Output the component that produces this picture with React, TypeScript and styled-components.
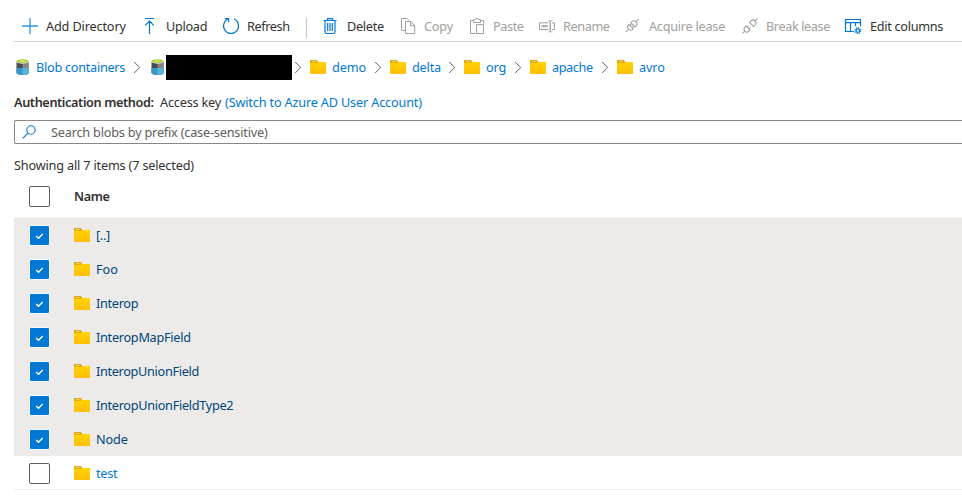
import React from "react";
import styled, { createGlobalStyle } from "styled-components";

const GlobalStyle = createGlobalStyle`
  * { box-sizing: border-box; }
  body { margin: 0; background: #fff; overflow: hidden; }
`;

const Page = styled.main`
  width: 100%;
  height: 499px;
  padding-left: 14px;
  overflow: hidden;
  font: 12.7px/18px "Noto Sans", sans-serif;
  color: #323130;
  white-space: nowrap;
`;

const Toolbar = styled.nav`
  display: flex;
  height: 42px;
  padding: 11px 0 0 8px;
  border-bottom: 1px solid #d2d0ce;
`;

const Command = styled.button<{ $width: number; $disabled?: boolean; $gap?: number }>`
  display: flex;
  flex: none;
  align-items: center;
  gap: ${({ $gap }) => $gap ?? 8}px;
  width: ${({ $width }) => $width}px;
  height: 30px;
  padding: 0;
  border: 0;
  background: none;
  font: inherit;
  text-align: left;
  color: ${({ $disabled }) => ($disabled ? "#a19f9d" : "#323130")};
`;

const Separator = styled.div`
  flex: none;
  width: 1px;
  height: 20px;
  margin: 7px 15px 0 0;
  background: #c8c6c4;
`;

const Label = styled.span<{ $spacing?: number }>`
  display: block;
  letter-spacing: ${({ $spacing }) => $spacing ?? 0}px;
`;

const Icon = styled.svg`
  display: block;
  flex: none;
  overflow: visible;
`;

const Breadcrumbs = styled.nav`
  display: flex;
  align-items: center;
  height: 25px;
  margin-top: 13px;
  color: #0078d4;
`;

const Crumb = styled.a<{ $width: number }>`
  display: flex;
  flex: none;
  align-items: center;
  gap: 6px;
  width: ${({ $width }) => $width}px;
  padding-bottom: 1px;
`;

const ContainerCrumb = styled(Crumb)`
  gap: 7px;
  padding-left: 2px;
`;

const Chevron = styled(Icon)`
  width: 8px;
  margin-right: 8px;
`;

const Redacted = styled.div`
  flex: none;
  width: 126px;
  height: 25px;
  margin-right: 2px;
  background: #000;
`;

const AuthRow = styled.div`
  display: flex;
  height: 18px;
  margin-top: 13px;
`;

const AuthLabel = styled.strong`
  width: 146px;
  font-weight: 600;
  letter-spacing: -0.38px;
`;

const AuthValue = styled.span`
  width: 65px;
  letter-spacing: -0.2px;
`;

const Link = styled.a`
  color: #0078d4;
  letter-spacing: -0.17px;
`;

const SearchBox = styled.div`
  display: flex;
  align-items: center;
  gap: 14px;
  height: 24px;
  margin-top: 9px;
  padding-left: 7px;
  border: 1px solid #8a8886;
  border-right: 0;
  border-radius: 2px 0 0 2px;
  color: #605e5c;
`;

const Summary = styled.div`
  height: 18px;
  margin-top: 12px;
  letter-spacing: -0.18px;
`;

const HeaderRow = styled.div`
  display: flex;
  align-items: center;
  height: 43px;
  padding-left: 15px;
  font-weight: 600;
  letter-spacing: -0.4px;
`;

const Row = styled.div<{ $selected: boolean }>`
  display: flex;
  align-items: center;
  height: 34px;
  padding: 2px 0 0 15px;
  background: ${({ $selected }) => ($selected ? "#edebe9" : "#fff")};
  color: ${({ $selected }) => ($selected ? "#004578" : "#0078d4")};
  border-bottom: 1px solid #edebe9;
`;

const CheckCell = styled.div<{ $drop?: boolean }>`
  width: 45px;
  padding-top: ${({ $drop }) => ($drop ? 1 : 0)}px;
`;

const Checkbox = styled.div<{ $checked?: boolean }>`
  display: grid;
  place-items: center;
  width: 21px;
  height: 21px;
  border: 1px solid ${({ $checked }) => ($checked ? "#f6fbff" : "#605e5c")};
  border-radius: 2px;
  background: ${({ $checked }) => ($checked ? "#0078d4" : "#fff")};
`;

const NameCell = styled.a`
  display: flex;
  align-items: center;
  gap: 6px;
  padding-bottom: 1px;
`;

const Table = styled.section`
  border-top: 1px solid #f3f2f1;
`;

function Folder() {
  return (
    <Icon width="16" height="14" viewBox="0 0 16 14">
      <defs>
        <linearGradient id="folderFill" x1="0" y1="0" x2="0" y2="1">
          <stop offset="0" stopColor="#ffd400" />
          <stop offset="1" stopColor="#ffbe0a" />
        </linearGradient>
      </defs>
      <path d="M0 .6Q0 0 .6 0H7l1.2 2H16v12H0Z" fill="#e3a90c" />
      <path d="M2 1h3.6v.8H2Z" fill="#fbe08a" />
      <path d="M0 3h7L8.4 2H16v12H0Z" fill="url(#folderFill)" />
    </Icon>
  );
}

function Container() {
  return (
    <Icon width="13" height="16" viewBox="0 0 13 16">
      <path d="M.5 2.6v11C.5 16.8 12.5 16.8 12.5 13.6V2.6Z" fill="#4b4b4d" />
      <path d="M6.5 4v12c3.4 0 6-.8 6-2.3V2.6Z" fill="#858585" />
      <path d="M.5 9h12v4.7c0 3-12 3-12 0Z" fill="#3999c6" />
      <path d="M6.5 9h6v4.7c0 1.5-2.6 2.3-6 2.3Z" fill="#59b4d9" />
      <ellipse cx="6.5" cy="2.7" rx="6" ry="2" fill="#e6e6e6" />
      <ellipse cx="6.5" cy="2" rx="5.3" ry="1.8" fill="#9ccc10" />
      <ellipse cx="6.5" cy="2" rx="3.6" ry=".8" fill="#d9ee85" />
    </Icon>
  );
}

const drawings: Record<string, React.ReactNode> = {
  add: <path d="M8 0v16M0 8h16" strokeWidth="1.3" opacity=".8" />,
  upload: <path d="M3 .5h9M7.5 16V3.2M3.2 7.4l4.3-4.3 4.3 4.3" strokeWidth="1.2" />,
  refresh: <path d="M5.1 1.1A7.5 7.5 0 1 0 11 1.1M2 .6h3.7v3.7" strokeWidth="1.1" />,
  delete: <path d="M1.5 2.5h13M5.5 2.5V.6h5v1.9M3 2.5v11.3q0 1.7 1.7 1.7h6.6q1.7 0 1.7-1.7V2.5M5.7 5v8M8 5v8M10.3 5v8" strokeWidth="1.2" />,
  copy: <path d="M9 2.5 7.2.5H1.5v12h4M5.5 3.5h5.2l4 4v8H5.5ZM10.5 3.7v4h4" />,
  paste: <path d="M4.5 2.5H1.5v13h5M4.5 2.5V1.8h2C6.7-.1 9.3-.1 9.5 1.8h2v2.7h-7ZM11.5 2.5h3v3M7.5 6.5h7v9h-7Z" />,
  rename: <path d="M9.5 4.8H.5v6.7h9M2.5 7.7h6v1h-6M13 4.8h2.5v6.7H13M9.2 2.5c2.1 0 2.1 1 2.1 1.8v7.9c0 .8 0 1.8-2.1 1.8M13.5 2.5c-2.2 0-2.2 1-2.2 1.8v7.9c0 .8 0 1.8 2.2 1.8" />,
  acquire: (
    <g transform="translate(7.2 7.5) rotate(-45)">
      <path d="M-9.3 0h4M5.3 0h4M-1.6-3.1h-.6a3.1 3.1 0 0 0 0 6.2h.6ZM1-3.7v7.4M1-3.1h1.2a3.1 3.1 0 0 1 0 6.2H1M-1.6-1.5H1M-1.6 1.5H1" />
    </g>
  ),
  break: (
    <g transform="translate(8 8) rotate(-45)">
      <path d="M-10.5 0h3.2M7.3 0h3.2M-3-2.9h-1.3a2.9 2.9 0 0 0 0 5.8H-3ZM2.2-3.5v7M2.2-2.9h2.1a2.9 2.9 0 0 1 0 5.8H2.2M-3-1.4h2.2M-3 1.4h2.2" />
    </g>
  ),
  columns: (
    <>
      <path d="M9 13.5H.5v-12h15v6.7M.5 4.6h15M5.5 4.6v8.9M10.5 4.6v3.6" strokeWidth="1.2" />
      <circle cx="12.8" cy="12.6" r="1.8" strokeWidth="1.2" />
      <circle cx="12.8" cy="12.6" r="2.9" strokeWidth="1.2" strokeDasharray="1.15 1.13" />
    </>
  ),
};

function CommandIcon({ name, disabled }: { name: string; disabled?: boolean }) {
  return (
    <Icon width="16" height="16" viewBox="0 0 16 16" fill="none" stroke={disabled ? "#a19f9d" : "#0078d4"}>
      {drawings[name]}
    </Icon>
  );
}

const commands = [
  { name: "Add Directory", icon: "add", width: 120, gap: 8, spacing: -0.15 },
  { name: "Upload", icon: "upload", width: 81, gap: 8, spacing: -0.3 },
  { name: "Refresh", icon: "refresh", width: 83, gap: 8, spacing: -0.4 },
  { name: "Delete", icon: "delete", width: 78, gap: 9, spacing: -0.3 },
  { name: "Copy", icon: "copy", width: 69, disabled: true, gap: 8, spacing: -0.2 },
  { name: "Paste", icon: "paste", width: 70, disabled: true, gap: 8, spacing: -0.4 },
  { name: "Rename", icon: "rename", width: 86, disabled: true, gap: 8, spacing: -0.4 },
  { name: "Acquire lease", icon: "acquire", width: 117, disabled: true, gap: 8, spacing: -0.25 },
  { name: "Break lease", icon: "break", width: 103, disabled: true, gap: 8, spacing: -0.4 },
  { name: "Edit columns", icon: "columns", width: 110, gap: 9, spacing: -0.3 },
];

const path = [
  { name: "demo", width: 64, spacing: -0.1 },
  { name: "delta", width: 58, spacing: -0.2 },
  { name: "org", width: 50, spacing: -0.1 },
  { name: "apache", width: 71, spacing: -0.4 },
  { name: "avro", width: 60, spacing: -0.1 },
];

const files = [
  { name: "[..]", spacing: -0.3, selected: true },
  { name: "Foo", spacing: 0, selected: true },
  { name: "Interop", spacing: -0.3, selected: true },
  { name: "InteropMapField", spacing: -0.28, selected: true },
  { name: "InteropUnionField", spacing: -0.32, selected: true },
  { name: "InteropUnionFieldType2", spacing: -0.3, selected: true },
  { name: "Node", spacing: -0.1, selected: true },
  { name: "test", spacing: -0.3, selected: false },
];

function Next() {
  return (
    <Chevron width="8" height="13" viewBox="0 0 8 13" fill="none" stroke="#605e5c">
      <path d="m1.2 1 5.5 5.5L1.2 12" />
    </Chevron>
  );
}

export default function App() {
  return (
    <Page>
      <GlobalStyle />
      <Toolbar>
        {commands.map((c, i) => (
          <React.Fragment key={c.name}>
            {i === 3 && <Separator />}
            <Command $width={c.width} $disabled={c.disabled} $gap={c.gap} disabled={c.disabled}>
              <CommandIcon name={c.icon} disabled={c.disabled} />
              <Label $spacing={c.spacing}>{c.name}</Label>
            </Command>
          </React.Fragment>
        ))}
      </Toolbar>
      <Breadcrumbs>
        <ContainerCrumb $width={119}><Container /><Label $spacing={-0.27}>Blob containers</Label></ContainerCrumb>
        <Next />
        <ContainerCrumb $width={17}><Container /></ContainerCrumb>
        <Redacted />
        {path.map((p) => (
          <React.Fragment key={p.name}>
            <Next />
            <Crumb $width={p.width}><Folder /><Label $spacing={p.spacing}>{p.name}</Label></Crumb>
          </React.Fragment>
        ))}
      </Breadcrumbs>
      <AuthRow>
        <AuthLabel>Authentication method:</AuthLabel>
        <AuthValue>Access key</AuthValue>
        <Link>(Switch to Azure AD User Account)</Link>
      </AuthRow>
      <SearchBox>
        <Icon width="15" height="14" viewBox="0 0 15 14" fill="none" stroke="#0078d4" strokeWidth="1.1">
          <circle cx="9" cy="5" r="4.2" />
          <path d="m6 8.1-5.2 5.2" />
        </Icon>
        <Label $spacing={-0.2}>Search blobs by prefix (case-sensitive)</Label>
      </SearchBox>
      <Summary>Showing all 7 items (7 selected)</Summary>
      <HeaderRow>
        <CheckCell $drop><Checkbox /></CheckCell>
        Name
      </HeaderRow>
      <Table>
        {files.map((file) => (
          <Row key={file.name} $selected={file.selected}>
            <CheckCell>
              <Checkbox $checked={file.selected}>
                {file.selected && (
                  <Icon width="9" height="8" viewBox="0 0 9 8" fill="none" stroke="#fff" strokeWidth="1.4">
                    <path d="m1.2 4 2.3 2.3 4.2-4.2" />
                  </Icon>
                )}
              </Checkbox>
            </CheckCell>
            <NameCell><Folder /><Label $spacing={file.spacing}>{file.name}</Label></NameCell>
          </Row>
        ))}
      </Table>
    </Page>
  );
}
